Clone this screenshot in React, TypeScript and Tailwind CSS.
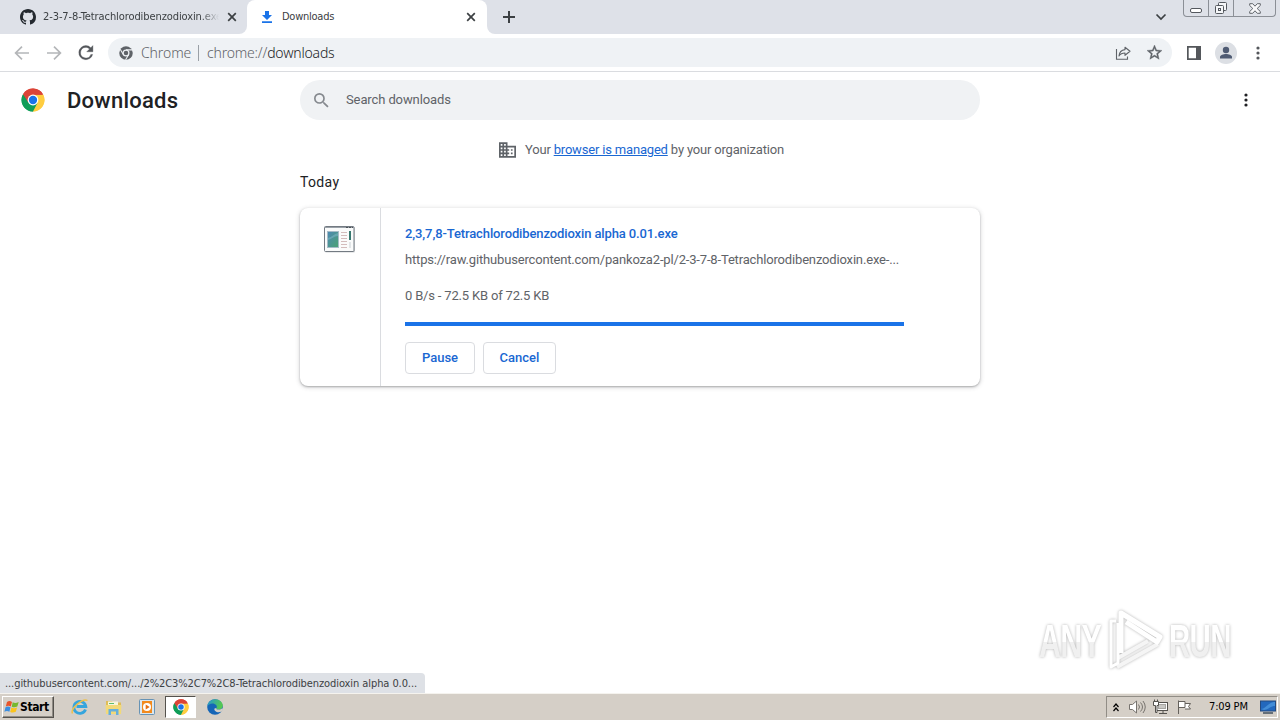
import React from "react";

const ui = "font-['DejaVu_Sans_Condensed','DejaVu_Sans',sans-serif] [font-stretch:condensed]";

function ChromeLogo({ className }: { className: string }) {
  return (
    <svg viewBox="0 0 48 48" className={className}>
      <path d="M24 24 4.100 12.500A23 23 0 0 1 43.900 12.500Z" fill="#db4437" />
      <path d="M24 24 43.900 12.500A23 23 0 0 1 24 47Z" fill="#ffcd40" />
      <path d="M24 24 24 47A23 23 0 0 1 4.100 12.500Z" fill="#0f9d58" />
      <path d="M24 13.500H44.400A23 23 0 0 1 24 47L33.100 29.300Z" fill="#ffcd40" />
      <path d="M4.100 12.500 14.900 29.300 33.100 29.300 24 47A23 23 0 0 1 4.100 12.500Z" fill="#0f9d58" />
      <path d="M4.100 12.500A23 23 0 0 1 44.400 13.500H24L14.900 29.300Z" fill="#db4437" />
      <circle cx="24" cy="24" r="10.800" fill="#fff" />
      <circle cx="24" cy="24" r="8.300" fill="#1a73e8" />
    </svg>
  );
}

function CloseIcon() {
  return (
    <svg viewBox="0 0 10 10" className="h-[10px] w-[10px] shrink-0" stroke="#3c4043" strokeWidth="1.7">
      <path d="M1.200 1.200 8.800 8.800M8.800 1.200 1.200 8.800" />
    </svg>
  );
}

function Dots({ className }: { className: string }) {
  return (
    <svg viewBox="0 0 4 16" className={className} fill="currentColor">
      <circle cx="2" cy="3" r="1.600" />
      <circle cx="2" cy="8" r="1.600" />
      <circle cx="2" cy="13" r="1.600" />
    </svg>
  );
}

function TabStrip() {
  return (
    <div className="flex h-[34px] bg-white">
      <div className={`flex w-[247px] items-center rounded-br-[8px] bg-[#dee1e8] pl-[20px] text-[11px] text-[#3c4043] ${ui}`}>
        <svg viewBox="0 0 16 16" className="h-4 w-4 shrink-0" fill="#24292f">
          <path d="M8 0C3.58 0 0 3.58 0 8c0 3.54 2.29 6.53 5.47 7.59.4.07.55-.17.55-.38 0-.19-.01-.82-.01-1.49-2.01.37-2.53-.49-2.69-.94-.09-.23-.48-.94-.82-1.13-.28-.15-.68-.52-.01-.53.63-.01 1.08.58 1.23.82.72 1.21 1.87.87 2.33.66.07-.52.28-.87.51-1.07-1.78-.2-3.64-.89-3.64-3.95 0-.87.31-1.59.82-2.15-.08-.2-.36-1.02.08-2.12 0 0 .67-.21 2.2.82.64-.18 1.32-.27 2-.27s1.36.09 2 .27c1.53-1.04 2.2-.82 2.2-.82.44 1.1.16 1.92.08 2.12.51.56.82 1.27.82 2.15 0 3.07-1.87 3.75-3.65 3.95.29.25.54.73.54 1.48 0 1.07-.01 1.93-.01 2.2 0 .21.15.46.55.38A8.01 8.01 0 0 0 16 8c0-4.42-3.58-8-8-8Z" />
        </svg>
        <span className="ml-[7px] w-[184px] shrink-0 overflow-hidden whitespace-nowrap tracking-[-0.09px] [mask-image:linear-gradient(to_right,black_158px,transparent_176px)]">
          2-3-7-8-Tetrachlorodibenzodioxin.exe
        </span>
        <CloseIcon />
      </div>
      <div className="w-[240px] bg-[#dee1e8]">
        <div className={`flex h-full items-center rounded-t-[8px] bg-white pl-[13px] text-[11px] text-[#3c4043] ${ui}`}>
          <svg viewBox="0 0 14 16" className="h-4 w-[14px] shrink-0" fill="#1a73e8">
            <path d="M5 2h4v4h3L7 11 2 6h3zM2 12.200h10V14H2z" />
          </svg>
          <span className="ml-[8px] w-[184px] pt-px whitespace-nowrap tracking-[-0.25px]">Downloads</span>
          <CloseIcon />
        </div>
      </div>
      <div className="flex flex-1 items-center rounded-bl-[8px] bg-[#dee1e8] pl-[16px]">
        <svg viewBox="0 0 12 12" className="h-3 w-3" stroke="#3c4043" strokeWidth="2">
          <path d="M6 0v12M0 6h12" />
        </svg>
        <svg viewBox="0 0 12 8" className="ml-auto h-2 w-3" fill="none" stroke="#3c4043" strokeWidth="1.7">
          <path d="m1.500 1.500 4.500 4.500 4.500-4.500" />
        </svg>
        <div className="mr-[4px] ml-[16px] flex h-[17px] w-[93px] self-start rounded-b-[4px] border border-t-0 border-[#8b8f96]">
          <div className="flex w-[25px] items-center justify-center border-r border-[#8b8f96]">
            <svg viewBox="0 0 12 16" className="h-4 w-3" fill="#fff" stroke="#54585e">
              <rect x=".5" y="8.500" width="11" height="4" rx="1.500" />
            </svg>
          </div>
          <div className="flex w-[25px] items-center justify-center border-r border-[#8b8f96]">
            <svg viewBox="0 0 14 14" className="h-[14px] w-[14px]" fill="#f5f6f8" stroke="#54585e">
              <rect x="4.500" y="1.500" width="8" height="8" rx="1" />
              <rect x="1.500" y="4.500" width="8" height="8" rx="1" />
              <rect x="4.500" y="7.500" width="2" height="2" />
            </svg>
          </div>
          <div className="flex flex-1 items-center justify-center">
            <svg viewBox="0 0 12 11" className="h-[11px] w-3" fill="#f8f8fa" stroke="#54585e" strokeWidth=".9">
              <path d="M.7.7h3L6 3.200 8.300.7h3v1.800L8.200 5.500l3.100 3v1.800h-3L6 7.800l-2.300 2.500h-3V8.500l3.100-3-3.100-3z" />
            </svg>
          </div>
        </div>
      </div>
    </div>
  );
}

function Toolbar() {
  return (
    <div className="flex h-[38px] items-center border-b border-[#dadce0] bg-white text-[#5f6368]">
      <svg viewBox="0 0 16 16" className="ml-[14px] h-4 w-4" fill="none" stroke="#b4b6b9" strokeWidth="1.7">
        <path d="M15 8H2M8 1.600 1.600 8 8 14.400" />
      </svg>
      <svg viewBox="0 0 16 16" className="ml-[16px] h-4 w-4" fill="none" stroke="#b4b6b9" strokeWidth="1.7">
        <path d="M1 8h13M8 1.600 14.400 8 8 14.400" />
      </svg>
      <svg viewBox="4 4 16 16" className="ml-[16px] h-4 w-4" fill="#54575b" stroke="#54575b" strokeWidth=".4">
        <path d="M17.650 6.350A7.960 7.960 0 0 0 12 4a8 8 0 1 0 7.730 10h-2.080A6 6 0 1 1 12 6c1.660 0 3.140.69 4.220 1.780L13 11h7V4z" transform="translate(1.300 1.100) scale(.88)" />
      </svg>
      <div className="ml-[14px] flex h-[29px] w-[1064px] items-center rounded-full bg-[#eff2f5] pl-[11px] font-['Noto_Sans','Open_Sans',sans-serif] text-[14px] font-light">
        <svg viewBox="0 0 16 16" className="h-[14px] w-[14px]">
          <circle cx="8" cy="8" r="7.700" fill="#5f6368" />
          <path d="M8 4.400h7.200M4.900 9.800 1.400 3.800M11.100 9.800 7.500 15.800" stroke="#eff2f5" strokeWidth="1.2" />
          <circle cx="8" cy="8" r="4" fill="#eff2f5" />
          <circle cx="8" cy="8" r="2.600" fill="#5f6368" />
        </svg>
        <span className="ml-[8px] w-[50px] whitespace-nowrap tracking-[-0.1px]">Chrome</span>
        <span className="ml-[7px] h-4 w-px bg-[#9aa0a6]" />
        <span className="ml-[8px] whitespace-nowrap tracking-[-0.19px]">
          chrome://<span className="text-[#202124]">downloads</span>
        </span>
        <svg viewBox="0 0 16 16" className="mr-[2px] ml-auto h-4 w-4" fill="none" stroke="#5f6368" strokeWidth="1.1">
          <path d="M1.500 4v10.200h11V11.500" />
          <path d="M10 2.200 15 6.300 10 10.300V8C7.200 8 5.300 8.900 4 11 4.300 7.600 6.300 5 10 4.600Z" strokeLinejoin="round" />
        </svg>
        <svg viewBox="2 2 20 20" className="mr-[10px] ml-[14px] h-[15px] w-[15px]" fill="#5f6368">
          <path d="m22 9.240-7.190-.62L12 2 9.190 8.630 2 9.240l5.460 4.730L5.820 21 12 17.270 18.180 21l-1.630-7.030zM12 15.400l-3.760 2.270 1-4.280-3.320-2.880 4.380-.38L12 6.100l1.710 4.040 4.380.38-3.320 2.880 1 4.280z" stroke="#5f6368" strokeWidth=".5" />
        </svg>
      </div>
      <svg viewBox="0 0 14 14" className="ml-[15px] h-[14px] w-[14px]">
        <path fill="#54575b" fillRule="evenodd" d="M0 0h14v14H0zM1.700 1.700v10.600H9V1.700z" />
      </svg>
      <svg viewBox="0 0 22 22" className="ml-[14px] h-[22px] w-[22px]">
        <circle cx="11" cy="11" r="11" fill="#dcdfe4" />
        <circle cx="11" cy="8" r="3.200" fill="#4f5b73" />
        <path d="M5 16.500v-1.500c0-2 3.500-3 6-3s6 1 6 3v1.500z" fill="#4f5b73" />
      </svg>
      <Dots className="ml-[19px] h-[16px] w-[4px] text-[#54575b]" />
    </div>
  );
}

function FileIcon() {
  return (
    <svg viewBox="0 0 32 27" className="h-[27px] w-8">
      <defs>
        <linearGradient id="app" x2="1" y2="1">
          <stop stopColor="#4e88b4" />
          <stop offset="1" stopColor="#4ba372" />
        </linearGradient>
      </defs>
      <rect x="1" y="1" width="30" height="25.500" rx="1" fill="#d4d6d8" />
      <rect x=".5" y=".5" width="29.500" height="25" rx="1" fill="#fafbfb" stroke="#737a82" />
      <path d="M1 1.500h29" stroke="#9aa1a8" />
      <path d="M22 1.500h2M25 1.500h2M28 1.500h1" stroke="#4b5157" />
      <rect x="3.500" y="5.500" width="11" height="16" fill="url(#app)" stroke="#a7bcc8" />
      <path d="M4 12c4-1 6-4 10-5v3c-4 0-6 3-10 4z" fill="#7cb4c4" opacity=".6" />
      <path d="M17 6.500h6M17 9.500h6M17 12.500h6M17 15.500h6M17 18.500h6M17 21.500h6" stroke="#d3bcbc" />
      <path d="M26 5v9" stroke="#36786f" strokeWidth="2" />
      <path d="M26 16v6" stroke="#e1e5e7" strokeWidth="2" />
    </svg>
  );
}

function DownloadsPage() {
  return (
    <main className="flex flex-1 flex-col bg-white font-[Roboto,sans-serif] text-[13px] text-[#5f6368]">
      <header className="flex h-14 items-center">
        <div className="flex w-[300px] items-center pl-[21px]">
          <ChromeLogo className="h-6 w-6" />
          <h1 className="ml-[22px] whitespace-nowrap text-[22px] font-medium tracking-[0.25px] text-[#202124]">Downloads</h1>
        </div>
        <div className="flex h-10 w-[680px] items-center rounded-full bg-[#f0f2f4] pl-[14px]">
          <svg viewBox="3 3 18 18" className="h-[15px] w-[15px]" fill="#85898e">
            <path d="M15.500 14h-.79l-.28-.27A6.470 6.470 0 0 0 16 9.500 6.500 6.500 0 1 0 9.500 16c1.610 0 3.090-.59 4.230-1.570l.27.28v.79l5 4.990L20.490 19zm-6 0C7.010 14 5 11.990 5 9.500S7.010 5 9.500 5 14 7.010 14 9.500 11.990 14 9.500 14" />
          </svg>
          <span className="ml-[17px] whitespace-nowrap tracking-[-0.11px]">Search downloads</span>
        </div>
        <Dots className="ml-[264px] h-[16px] w-[4px] text-[#202124]" />
      </header>
      <div className="flex h-[44px] items-center justify-center pl-[3px]">
        <svg viewBox="2 3 20 18" className="h-[16px] w-[17px]" fill="#5f6368">
          <path d="M12 7V3H2v18h20V7zM6 19H4v-2h2zm0-4H4v-2h2zm0-4H4V9h2zm0-4H4V5h2zm4 12H8v-2h2zm0-4H8v-2h2zm0-4H8V9h2zm0-4H8V5h2zm10 12h-8v-2h2v-2h-2v-2h2v-2h-2V9h8zm-2-8h-2v2h2zm0 4h-2v2h2z" />
        </svg>
        <span className="ml-[9px] whitespace-nowrap tracking-[-0.18px]">
          Your <a className="text-[#1967d2] underline">browser is managed</a> by your organization
        </span>
      </div>
      <div className="mx-auto w-[680px]">
        <h2 className="h-[36px] text-[14px] leading-[20px] tracking-[0.35px] text-[#202124]">Today</h2>
        <section className="flex h-[178px] rounded-[8px] bg-white shadow-[0_1px_2px_rgba(60,64,67,0.35),0_1px_4px_1px_rgba(60,64,67,0.16)]">
          <div className="w-[81px] border-r border-[#dadce0] pt-[18px] pl-[24px]">
            <FileIcon />
          </div>
          <div className="flex w-[523px] flex-col items-start pt-[16px] pl-[24px]">
            <a className="whitespace-nowrap font-medium leading-[20px] tracking-[-0.12px] text-[#1967d2]">2,3,7,8-Tetrachlorodibenzodioxin alpha 0.01.exe</a>
            <span className="mt-[6px] whitespace-nowrap leading-[20px] tracking-[-0.165px]">https://raw.githubusercontent.com/pankoza2-pl/2-3-7-8-Tetrachlorodibenzodioxin.exe-...</span>
            <span className="mt-[16px] whitespace-nowrap leading-[20px] tracking-[-0.18px]">0 B/s - 72.5 KB of 72.5 KB</span>
            <div className="mt-[16px] h-[4px] w-full bg-[#1a73e8]" />
            <div className="mt-[16px] flex gap-2 font-medium text-[#1967d2]">
              <button className="h-8 w-[70px] rounded-[4px] border border-[#dadce0]">Pause</button>
              <button className="h-8 w-[73px] rounded-[4px] border border-[#dadce0]">Cancel</button>
            </div>
          </div>
        </section>
      </div>
    </main>
  );
}

function Watermark() {
  return (
    <div className="absolute top-[608px] left-[1039px] flex h-[66px] w-[197px] items-center font-['Liberation_Sans',sans-serif] text-[46px] leading-none font-bold tracking-[-1px] text-transparent [filter:drop-shadow(0_0_1.5px_rgba(0,0,0,0.3))]">
      <div className="w-[69px]">
        <span className="block w-max origin-left scale-x-[0.66] bg-[linear-gradient(to_bottom,#fff_52%,#f0f0f0_52%)] bg-clip-text">ANY</span>
      </div>
      <svg viewBox="0 0 56 66" className="h-[66px] w-14 shrink-0" fill="none" stroke="#fff" strokeWidth="5" strokeLinejoin="round">
        <path d="M9 59 50 36M10 50 40 33" stroke="#f5f5f5" strokeWidth="4" />
        <path d="M13 45V5L52 29 49 34 18 14" />
        <path d="M8 13H3v46l7-4V15" strokeWidth="3" />
      </svg>
      <div className="ml-[5px] w-[66px]">
        <span className="block w-max origin-left scale-x-[0.64] bg-[linear-gradient(to_bottom,#fff_52%,#f0f0f0_52%)] bg-clip-text">RUN</span>
      </div>
    </div>
  );
}

function Taskbar() {
  return (
    <footer className={`flex h-[27px] items-center border-t border-[#f5f3ee] bg-[#d5cfc7] text-[11px] text-black ${ui}`}>
      <div className="ml-[2px] flex h-[22px] w-[52px] items-center border border-t-white border-r-[#55524d] border-b-[#55524d] border-l-white pl-px shadow-[inset_-1px_-1px_#908c85]">
        <svg viewBox="0 0 16 16" className="h-4 w-4 shrink-0">
          <path d="M3 3c2-1.500 3.500-1 5 0L6.800 7.500c-1.800-1-3.200-1-5 0z" fill="#e8552a" />
          <path d="M8.700 3.300c2 1 3.700.8 6-.3l-1.400 4.500c-2 1-3.700 1-5.600.2z" fill="#76b82e" />
          <path d="M1.500 8.300c1.800-1 3.200-.9 5 0L5.400 12.700c-1.800-1-3.200-.9-5 0z" fill="#3b8ee0" />
          <path d="M7.400 8.600c2 .9 3.700.8 5.700-.2l-1.300 4.400c-2 1-3.700 1-5.600.2z" fill="#fbc41c" />
        </svg>
        <span className="whitespace-nowrap text-[12px] font-bold tracking-[-0.4px]">Start</span>
      </div>
      <svg viewBox="0 0 18 18" className="ml-[17px] h-[18px] w-[18px]" fill="none">
        <path d="M14.500 11.500a6 6 0 1 1 .3-3H5.500" stroke="#35a5dd" strokeWidth="2.8" />
        <path d="M1.500 15.500C-1 11 12-.5 16.500 2.500" stroke="#edc04c" strokeWidth="1.5" />
      </svg>
      <svg viewBox="0 0 17 17" className="ml-[16px] h-[17px] w-[17px]">
        <path d="M1 2h6l1 1.500h8V15H1z" fill="#dfbd58" />
        <path d="M3 2.500h10v5H3z" fill="#f7f5dc" />
        <path d="M4 4.500h5" stroke="#5ebc6f" />
        <path d="M.5 6h16l-.5 9H1z" fill="#f2d979" />
        <path d="M3.500 16v-6h10v6H11v-3.500H6V16z" fill="#65afdd" />
      </svg>
      <svg viewBox="0 0 16 16" className="ml-[17px] h-4 w-4">
        <rect x=".5" y=".5" width="15" height="15" rx="1" fill="#dbe7ef" stroke="#6793b5" />
        <rect x="3" y="2" width="10" height="12" fill="#f28a1d" />
        <circle cx="8" cy="8" r="4" fill="#fff" />
        <path d="m6.700 5.500 4 2.500-4 2.500z" fill="#e56f12" />
      </svg>
      <div className="ml-[10px] flex h-[22px] w-[31px] items-center justify-center border border-t-[#55524d] border-r-white border-b-white border-l-[#55524d] bg-white">
        <ChromeLogo className="h-4 w-4" />
      </div>
      <svg viewBox="0 0 16 16" className="ml-[11px] h-4 w-4">
        <defs>
          <linearGradient id="edge" x2="1" y2=".3">
            <stop stopColor="#2394d8" />
            <stop offset="1" stopColor="#55c950" />
          </linearGradient>
        </defs>
        <circle cx="8" cy="8" r="7.800" fill="#1565b7" />
        <path d="M.2 7.500C.8 3.200 4 .2 8.200.2c4.500 0 7.600 3.100 7.600 6.300 0 2.500-2 4-4.200 4-1.900 0-2.800-.8-2.100-1.600C10.800 7 8.500 4.500 5.500 4.500 3 4.500.9 5.900.2 7.500" fill="url(#edge)" />
        <path d="M9.500 8.900c-.7.800.2 1.700 2.100 1.700 1.500 0 2.900-.5 3.600-1.500l.8 1.700-1.800 2c-4 1.500-7.500-.8-6.700-3.300z" fill="#d5cfc7" />
      </svg>
      <div className="mr-[2px] ml-auto flex h-[22px] w-[172px] items-center border border-t-[#918d86] border-r-white border-b-white border-l-[#918d86] pl-[6px]">
        <svg viewBox="0 0 6 9" className="h-[9px] w-[6px]" fill="none" stroke="#000" strokeWidth="1.2">
          <path d="m.5 4 2.500-3 2.500 3M.5 8 3 5l2.500 3" />
        </svg>
        <svg viewBox="0 0 18 16" className="ml-[9px] h-4 w-[18px]" fill="none" stroke="#77736e">
          <path d="M1.500 5.500h3L8.500 2v12l-4-3.500h-3z" fill="#fff" />
          <path d="M10.500 5.500q2 2.500 0 5M12.500 3.500q4 4.500 0 9M15 2q4.500 6 0 12" />
        </svg>
        <svg viewBox="0 0 17 16" className="ml-[6px] h-4 w-[17px]" stroke="#55524e">
          <rect x="4.500" y="3.500" width="11" height="8" fill="#fff" />
          <rect x="6.500" y="5.500" width="7" height="4" fill="#c9c8c5" stroke="#a7a5a1" />
          <path d="M7 14.500h8M11 12v2" />
          <path d="M1.500 2.500h5v4h-1.500v7H3.500v-7h-2zM2.500.5v2M5.500.5v2" fill="#fff" />
        </svg>
        <svg viewBox="0 0 16 16" className="ml-[7px] h-4 w-4" fill="#fff" stroke="#65615c">
          <path d="M2.500 15V1.500M3 2.500h6v6H3M9 4.500h5.500l-2 3 2 2.500H9" />
        </svg>
        <span className="ml-[17px] w-[50px] whitespace-nowrap tracking-[-0.15px]">7:09 PM</span>
        <svg viewBox="0 0 16 14" className="ml-px h-[14px] w-4">
          <rect x=".5" y="1" width="15" height="10" fill="#2368bd" stroke="#244a80" />
          <path d="M1 9C6 9 8 2 15 2v4c-5 0-7 4-11 4z" fill="#59a7e8" opacity=".6" />
          <path d="M3 12h10v2H3z" fill="#666f78" />
        </svg>
      </div>
    </footer>
  );
}

export default function App() {
  return (
    <div className="relative flex h-[720px] w-[1280px] flex-col overflow-hidden bg-white">
      <TabStrip />
      <Toolbar />
      <DownloadsPage />
      <Watermark />
      <div className={`absolute top-[673px] left-0 h-[20px] w-[425px] rounded-tr-[4px] bg-[#dee1e6] pl-[5px] text-[11px] leading-[21px] whitespace-nowrap text-[#3c4043] ${ui}`}>
        <span className="tracking-[-0.08px]">...githubusercontent.com/.../2%2C3%2C7%2C8-Tetrachlorodibenzodioxin alpha 0.0...</span>
      </div>
      <Taskbar />
    </div>
  );
}
